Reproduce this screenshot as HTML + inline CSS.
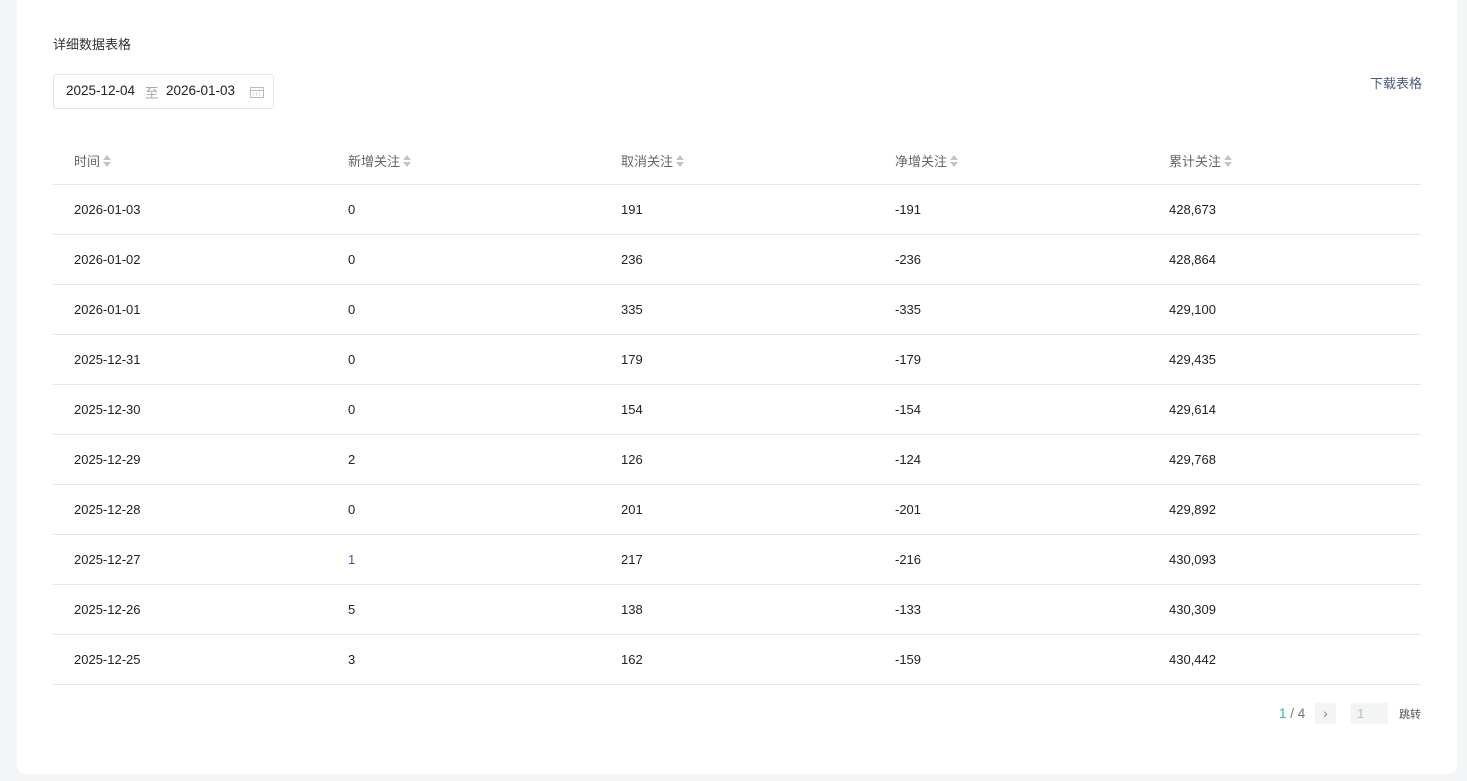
<!DOCTYPE html>
<html><head><meta charset="utf-8"><style>
body{margin:0;background:#f4f5f7;font-family:"Liberation Sans","Noto Sans CJK SC",sans-serif;width:1467px;height:781px;overflow:hidden;position:relative}
.card{position:absolute;left:17px;top:-10px;width:1440px;height:784px;background:#fff;border-radius:8px}
.abs{position:absolute}
.title{left:53px;top:34px;font-size:13px;color:#333}
.date{left:53px;top:74px;width:221px;height:35px;border:1px solid #e3e5e8;border-radius:3px;font-size:13.5px;color:#222;box-sizing:border-box}
.dl{left:1370px;top:73px;font-size:13px;color:#4a5d7e}
table{position:absolute;left:53px;top:137px;width:1368px;border-collapse:collapse;font-size:13px;color:#222}
td,th{text-align:left;padding:1px 0 0 21px;height:49px;border-bottom:1px solid #e6e7ea;font-weight:normal;box-sizing:border-box}
td{height:50px}
th{height:47px;padding-top:0;color:#666}
.s{display:inline-block;vertical-align:middle;margin-left:3px;width:8px;height:12px;position:relative;top:-1px}
.s:before,.s:after{content:"";position:absolute;left:0;border-left:4px solid transparent;border-right:4px solid transparent}
.s:before{top:0;border-bottom:5px solid #c0c4cc}.s:after{bottom:0;border-top:5px solid #c0c4cc}
</style></head><body>
<div class="card"></div>
<div class="abs title">详细数据表格</div>
<div class="abs date"><span class="abs" style="left:12px;top:8px">2025-12-04</span><span class="abs" style="left:91px;top:7px;color:#aaa">至</span><span class="abs" style="left:112px;top:8px">2026-01-03</span>
<svg class="abs" style="left:196px;top:11px" width="14" height="12"><rect x="0.5" y="1.5" width="13" height="10" fill="none" stroke="#bbb"/><line x1="0" y1="4.5" x2="14" y2="4.5" stroke="#bbb"/><path d="M3 7h1M6 7h1M9 7h1M3 9h1M6 9h1M9 9h1" stroke="#bbb"/></svg></div>
<div class="abs dl">下载表格</div>
<table>
<colgroup><col style="width:274px"><col style="width:273px"><col style="width:274px"><col style="width:274px"><col></colgroup>
<tr><th>时间<span class="s"></span></th><th>新增关注<span class="s"></span></th><th>取消关注<span class="s"></span></th><th>净增关注<span class="s"></span></th><th>累计关注<span class="s"></span></th></tr>
<tr><td>2026-01-03</td><td>0</td><td>191</td><td>-191</td><td>428,673</td></tr>
<tr><td>2026-01-02</td><td>0</td><td>236</td><td>-236</td><td>428,864</td></tr>
<tr><td>2026-01-01</td><td>0</td><td>335</td><td>-335</td><td>429,100</td></tr>
<tr><td>2025-12-31</td><td>0</td><td>179</td><td>-179</td><td>429,435</td></tr>
<tr><td>2025-12-30</td><td>0</td><td>154</td><td>-154</td><td>429,614</td></tr>
<tr><td>2025-12-29</td><td>2</td><td>126</td><td>-124</td><td>429,768</td></tr>
<tr><td>2025-12-28</td><td>0</td><td>201</td><td>-201</td><td>429,892</td></tr>
<tr><td>2025-12-27</td><td style="color:#3a5a9a">1</td><td>217</td><td>-216</td><td>430,093</td></tr>
<tr><td>2025-12-26</td><td>5</td><td>138</td><td>-133</td><td>430,309</td></tr>
<tr><td>2025-12-25</td><td>3</td><td>162</td><td>-159</td><td>430,442</td></tr>
</table>
<div class="abs" style="left:1279px;top:706px;font-size:13.5px;color:#777"><span style="color:#1cc0a0">1</span> / 4</div>
<div class="abs" style="left:1315px;top:703px;width:21px;height:21px;background:#f3f4f6;color:#888;font-size:14px;text-align:center;line-height:20px">›</div>
<div class="abs" style="left:1351px;top:703px;width:37px;height:21px;background:#f3f4f6;color:#bbb;font-size:13px;line-height:21px;box-sizing:border-box;padding-left:6px">1</div>
<div class="abs" style="left:1399px;top:706px;font-size:11px;color:#555">跳转</div>
</body></html>
